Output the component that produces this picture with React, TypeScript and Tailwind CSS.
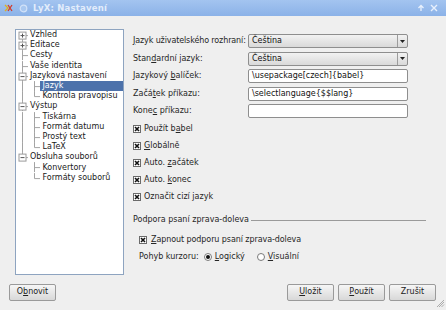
import React from 'react';

type TreeItem = {
  label: string;
  level: 0 | 1;
  expander?: '+' | '-';
  first?: boolean;
  last?: boolean;
  parentLast?: boolean;
  childFirst?: boolean;
  childLast?: boolean;
  selected?: boolean;
};

const treeItems: TreeItem[] = [
  { label: 'Vzhled', level: 0, expander: '+', first: true },
  { label: 'Editace', level: 0, expander: '+' },
  { label: 'Cesty', level: 0 },
  { label: 'Vaše identita', level: 0 },
  { label: 'Jazyková nastavení', level: 0, expander: '-' },
  { label: 'Jazyk', level: 1, childFirst: true, selected: true },
  { label: 'Kontrola pravopisu', level: 1, childLast: true },
  { label: 'Výstup', level: 0, expander: '-' },
  { label: 'Tiskárna', level: 1, childFirst: true },
  { label: 'Formát datumu', level: 1 },
  { label: 'Prostý text', level: 1 },
  { label: 'LaTeX', level: 1, childLast: true },
  { label: 'Obsluha souborů', level: 0, expander: '-', last: true },
  { label: 'Konvertory', level: 1, childFirst: true, parentLast: true },
  { label: 'Formáty souborů', level: 1, childLast: true, parentLast: true },
];

const LINE = '#a4a4a4';

function Connector({ item }: { item: TreeItem }) {
  const h = 10;
  const mid = 5;
  if (item.level === 0) {
    return (
      <svg width="12" height="10.2" viewBox="0 0 12 10" className="shrink-0">
        {/* trunk */}
        <line x1="6.5" y1={item.first ? mid : 0} x2="6.5" y2={item.last ? mid : h} stroke={LINE} strokeWidth="1" />
        <line x1="6.5" y1={mid + 0.5} x2="12" y2={mid + 0.5} stroke={LINE} strokeWidth="1" />
        {item.expander && (
          <g>
            <rect x="3" y="2" width="7" height="7" fill="#fff" stroke="#9a9a9a" strokeWidth="1" />
            <line x1="4.5" y1="5.5" x2="8.5" y2="5.5" stroke="#555" strokeWidth="1" />
            {item.expander === '+' && <line x1="6.5" y1="3.5" x2="6.5" y2="7.5" stroke="#555" strokeWidth="1" />}
          </g>
        )}
      </svg>
    );
  }
  return (
    <svg width="24" height="10.2" viewBox="0 0 24 10" className="shrink-0">
      {!item.parentLast && <line x1="6.5" y1="0" x2="6.5" y2={h} stroke={LINE} strokeWidth="1" />}
      <line x1="18.5" y1="0" x2="18.5" y2={item.childLast ? mid + 0.5 : h} stroke={LINE} strokeWidth="1" />
      <line x1="18.5" y1={mid + 0.5} x2="24" y2={mid + 0.5} stroke={LINE} strokeWidth="1" />
    </svg>
  );
}

function Mn({ children }: { children: React.ReactNode }) {
  return <span className="underline underline-offset-[1px]">{children}</span>;
}

function CheckBox() {
  return (
    <svg width="8" height="8" viewBox="0 0 8 8" className="shrink-0">
      <rect x="0.5" y="0.5" width="7" height="7" fill="#fff" stroke="#6b6b6b" />
      <path d="M2 2 L6 6 M6 2 L2 6" stroke="#111" strokeWidth="1.6" />
    </svg>
  );
}

function Radio({ on }: { on?: boolean }) {
  return (
    <svg width="8" height="8" viewBox="0 0 8 8" className="shrink-0">
      <circle cx="4" cy="4" r="3.5" fill="#fff" stroke="#7a7a7a" />
      {on && <circle cx="4" cy="4" r="2" fill="#111" />}
    </svg>
  );
}

function Combo({ value }: { value: string }) {
  return (
    <div className="flex h-[14px] w-[160px] items-stretch rounded-[2px] border border-[#8e8e8e] bg-gradient-to-b from-[#f2f2f2] to-[#d9d9d9]">
      <div className="flex flex-1 items-center pl-[3px] text-[#111]">{value}</div>
      <div className="flex w-[10px] items-center justify-center border-l border-[#9c9c9c]">
        <svg width="5" height="3" viewBox="0 0 5 3">
          <path d="M0 0 H5 L2.5 3 Z" fill="#222" />
        </svg>
      </div>
    </div>
  );
}

function TextInput({ value }: { value?: string }) {
  return (
    <div className="flex h-[14px] w-[160px] items-center rounded-[2px] border border-[#8e8e8e] bg-white pl-[3px] text-[#111]">
      {value}
    </div>
  );
}

function Button({ children, className }: { children: React.ReactNode; className?: string }) {
  return (
    <div
      className={`flex h-[17.5px] w-[47px] items-center justify-center rounded-[2px] border border-[#9a9a9a] bg-gradient-to-b from-[#f6f6f6] to-[#d8d8d8] text-[#222] ${className ?? ''}`}
    >
      {children}
    </div>
  );
}

export default function App() {
  const formRows: { label: React.ReactNode; control: React.ReactNode }[] = [
    { label: <span className="tracking-[-0.12px]"><Mn>J</Mn>azyk uživatelského rozhraní:</span>, control: <Combo value="Čeština" /> },
    { label: <>Stan<Mn>d</Mn>ardní jazyk:</>, control: <Combo value="Čeština" /> },
    { label: <>Jazykový <Mn>b</Mn>alíček:</>, control: <TextInput value="\usepackage[czech]{babel}" /> },
    { label: <>Začá<Mn>t</Mn>ek příkazu:</>, control: <TextInput value="\selectlanguage{$$lang}" /> },
    { label: <>Kone<Mn>c</Mn> příkazu:</>, control: <TextInput /> },
  ];

  const checks: React.ReactNode[] = [
    <>Použít b<Mn>a</Mn>bel</>,
    <><Mn>G</Mn>lobálně</>,
    <>Auto. <Mn>z</Mn>ačátek</>,
    <>Auto. <Mn>k</Mn>onec</>,
    <>Označit cizí <Mn>j</Mn>azyk</>,
  ];

  return (
    <div className="relative flex h-[310px] w-[446px] flex-col overflow-hidden bg-[#efefef] font-['DejaVu_Sans',sans-serif] text-[8px] leading-none text-[#262626]">
      {/* Title bar */}
      <div className="flex h-[16px] shrink-0 items-center bg-gradient-to-b from-[#a3c4f0] to-[#8bb2e8] px-[4px]">
        <svg width="9" height="8" viewBox="0 0 9 8" className="shrink-0">
          <path d="M1 1 L4 4 L1 7" stroke="#e0b020" strokeWidth="1.3" fill="none" />
          <path d="M4 1 L8 7 M8 1 L4 7" stroke="#d23a2a" strokeWidth="1.3" />
        </svg>
        <svg width="9" height="9" viewBox="0 0 9 9" className="ml-[6px] shrink-0">
          <circle cx="4.5" cy="4.5" r="3.3" fill="#a9c8f0" stroke="#d2e2f8" strokeWidth="1.2" />
        </svg>
        <span className="ml-[5px] text-[8.5px] font-bold tracking-[0.2px] text-[#e3edfb]">LyX: Nastavení</span>
        <div className="flex-1" />
        <svg width="8" height="8" viewBox="0 0 8 8" className="mr-[5px]">
          <path d="M4 7 V1.5 M1.5 4 L4 1.5 L6.5 4" stroke="#e8f0fc" strokeWidth="1.3" fill="none" />
        </svg>
        <svg width="8" height="8" viewBox="0 0 8 8" className="mr-[4px]">
          <path d="M1 1 L7 7 M7 1 L1 7" stroke="#e8f0fc" strokeWidth="1.4" />
        </svg>
      </div>

      <div className="flex pl-[15px] pt-[13px]">
        {/* Tree */}
        <div className="h-[246px] w-[109px] shrink-0 border border-[#8ea4c0] bg-white">
          {treeItems.map((item) => (
            <div key={item.label} className="flex h-[10.2px] items-stretch">
              <Connector item={item} />
              <div
                className={`flex flex-1 items-center whitespace-nowrap ${item.level === 0 ? 'pl-[2px]' : 'pl-[2.5px]'} ${item.selected ? 'bg-[#4d72ab] text-white' : 'text-[#1a1a1a]'}`}
              >
                {item.label}
              </div>
            </div>
          ))}
        </div>

        {/* Right panel */}
        <div className="ml-[9px] flex w-[303px] flex-col pt-[5px]">
          <div className="flex flex-col gap-[3.5px]">
            {formRows.map((row, i) => (
              <div key={i} className="flex h-[14px] items-center">
                <div className="w-[115px] whitespace-nowrap">{row.label}</div>
                {row.control}
              </div>
            ))}
          </div>

          <div className="mt-[2px] flex flex-col">
            {checks.map((c, i) => (
              <div key={i} className="flex h-[17px] items-center gap-[3px]">
                <CheckBox />
                <span>{c}</span>
              </div>
            ))}
          </div>

          <div className="mt-[10px] flex h-[10px] items-center">
            <span className="whitespace-nowrap">Podpora psaní zprava-doleva</span>
            <div className="ml-[2px] mr-[10px] h-px flex-1 bg-[#9a9a9a]" />
          </div>

          <div className="mt-[6.5px] flex flex-col pl-[6px]">
            <div className="flex h-[17px] items-center gap-[4px]">
              <CheckBox />
              <span className="tracking-[-0.08px]">
                <Mn>Z</Mn>apnout podporu psaní zprava-doleva
              </span>
            </div>
            <div className="flex h-[17px] items-center">
              <span>Pohyb kurzoru:</span>
              <div className="ml-[5px] flex items-center gap-[3px]">
                <Radio on />
                <span>
                  <Mn>L</Mn>ogický
                </span>
              </div>
              <div className="ml-[12px] flex items-center gap-[3px]">
                <Radio />
                <span>
                  <Mn>V</Mn>isuální
                </span>
              </div>
            </div>
          </div>
        </div>
      </div>

      {/* Buttons */}
      <div className="mt-[8.5px] flex pl-[9px] pr-[10px]">
        <Button>
          O<Mn>b</Mn>novit
        </Button>
        <div className="flex-1" />
        <div className="flex gap-[4px]">
          <Button>
            <Mn>U</Mn>ložit
          </Button>
          <Button>
            <Mn>P</Mn>oužít
          </Button>
          <Button>Zrušit</Button>
        </div>
      </div>

      {/* resize grip */}
      <svg width="8" height="8" viewBox="0 0 8 8" className="absolute bottom-[2px] right-[1px]">
        <path d="M7 2 L2 7 M7 4.5 L4.5 7 M7 0 L0 7" stroke="#9a9a9a" strokeWidth="0.8" />
      </svg>
    </div>
  );
}
